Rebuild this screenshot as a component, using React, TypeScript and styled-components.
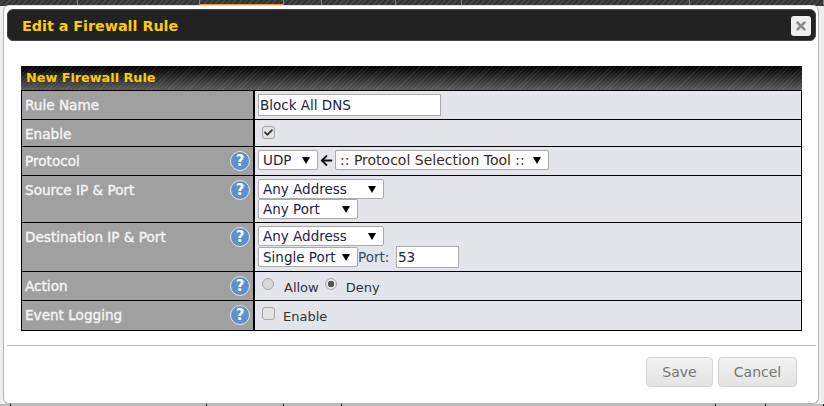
import React from 'react';
import styled, {createGlobalStyle} from "styled-components";
import {FaArrowLeft, FaCheck, FaTimes} from "react-icons/fa";

const GlobalStyle = createGlobalStyle`
    html, body {
        margin: 0;
        padding: 0;
        height: 100%;
        background: #eeeeee;
        font-family: "DejaVu Sans", Verdana, sans-serif;
        font-size: 13.5px;
    }
`

const Select = ({width, text, height = 20, accent}: {width: number; text: string; height?: number; accent?: boolean}) => (
    <StyledSelect $width={width} $height={height} $accent={accent}>
        <span>{text}</span>
        <Caret viewBox="0 0 8 8"><path d="M0 1h8L4 8z"/></Caret>
    </StyledSelect>
);

const Help = () => <HelpIcon>?</HelpIcon>;

const getRows = () => [
    {label: "Rule Name", height: 29, help: false, content: <TextInput $width={183} $height={22}>Block All DNS</TextInput>},
    {label: "Enable", height: 27, help: false, content: <CheckLine><Checkbox><FaCheck/></Checkbox></CheckLine>},
    {
        label: "Protocol", height: 29, help: true, content: (
            <ControlRow>
                <Select width={60} text="UDP"/>
                <Arrow><FaArrowLeft/></Arrow>
                <Select width={214} text=":: Protocol Selection Tool ::" accent/>
            </ControlRow>
        )
    },
    {
        label: "Source IP & Port", height: 47, help: true, content: (
            <ControlStack>
                <Select width={126} text="Any Address"/>
                <Select width={100} text="Any Port"/>
            </ControlStack>
        )
    },
    {
        label: "Destination IP & Port", height: 49, help: true, content: (
            <ControlStack>
                <Select width={126} text="Any Address"/>
                <ControlRow>
                    <Select width={100} text="Single Port"/>
                    <PortLabel>Port:</PortLabel>
                    <TextInput $width={63} $height={22}>53</TextInput>
                </ControlRow>
            </ControlStack>
        )
    },
    {
        label: "Action", height: 29, help: true, content: (
            <CheckLine>
                <Radio/>
                <OptionText $gap={10} $end={6}>Allow</OptionText>
                <Radio $checked/>
                <OptionText $gap={9}>Deny</OptionText>
            </CheckLine>
        )
    },
    {
        label: "Event Logging", height: 30, help: true, content: (
            <CheckLine>
                <Checkbox/>
                <OptionText $gap={8}>Enable</OptionText>
            </CheckLine>
        )
    },
];

const topTabs = [
    {width: 78}, {width: 122}, {width: 84, active: true}, {width: 38}, {width: 74}, {width: 66}, {width: 228}, {width: 134},
];
const bottomTicks = [11, 196, 77, 58, 374, 50, 58];

export default function App() {
    return (
        <Page>
            <GlobalStyle/>
            <TopNav>
                {topTabs.map((tab, i) => <NavTab key={i} $width={tab.width} $active={tab.active}/>)}
            </TopNav>
            <BottomNav>
                {bottomTicks.map((w, i) => <BottomTick key={i} $width={w}/>)}
            </BottomNav>
            <Dialog>
                <TitleBar>
                    <Title>Edit a Firewall Rule</Title>
                    <CloseButton><FaTimes/></CloseButton>
                </TitleBar>
                <Body>
                    <RuleTable>
                        <TableHeader>New Firewall Rule</TableHeader>
                        {getRows().map(row => (
                            <Row key={row.label} $height={row.height}>
                                <LabelCell>
                                    <span>{row.label}</span>
                                    {row.help && <Help/>}
                                </LabelCell>
                                <ValueCell>{row.content}</ValueCell>
                            </Row>
                        ))}
                    </RuleTable>
                </Body>
                <Footer>
                    <Button $width={67}>Save</Button>
                    <Button $width={79}>Cancel</Button>
                </Footer>
            </Dialog>
        </Page>
    );
}

const Page = styled.div`
    position: relative;
    width: 824px;
    height: 406px;
    overflow: hidden;
    background: #eeeeee;
`

const TopNav = styled.div`
    display: flex;
    height: 6px;
    background: repeating-linear-gradient(135deg, #333 0 2px, #444 2px 4px);
`

const NavTab = styled.div<{ $width: number; $active?: boolean }>`
    width: ${p => p.$width}px;
    box-sizing: border-box;
    border-right: 1px solid #888;
    border-bottom: ${p => p.$active ? "1px solid #e09a4a" : "none"};
    height: 5px;
`

const BottomNav = styled.div`
    position: absolute;
    left: 0;
    right: 0;
    bottom: 0;
    height: 2px;
    display: flex;
    background: #bbb;
`

const BottomTick = styled.div<{ $width: number }>`
    width: ${p => p.$width}px;
    box-sizing: border-box;
    border-right: 1px solid #222;
`

const Dialog = styled.div`
    position: absolute;
    left: 3px;
    top: 5px;
    width: 816px;
    height: 399px;
    box-sizing: border-box;
    background: #fff;
    border: 1px solid #b5b5b5;
    border-top-color: #ddd;
    border-radius: 6px;
    padding: 3px 2px 3px 3px;
    display: flex;
    flex-direction: column;
`

const TitleBar = styled.div`
    height: 32px;
    flex: none;
    background: #222222;
    border: 1px solid #444;
    border-radius: 6px;
    box-sizing: border-box;
    display: flex;
    align-items: center;
    justify-content: space-between;
    padding: 2px 4px 0 14px;
`

const Title = styled.div`
    color: #ffcc00;
    font-weight: bold;
    font-size: 14.3px;
`

const CloseButton = styled.div`
    width: 20px;
    height: 20px;
    background: #eeeeee;
    border-radius: 3px;
    color: #888;
    font-size: 14px;
    display: flex;
    align-items: center;
    justify-content: center;
`

const Body = styled.div`
    flex: 1;
    padding: 25px 14px 0;
`

const RuleTable = styled.div`
    width: 781px;
    box-sizing: border-box;
    border: 1px solid #000;
    border-top: none;
`

const TableHeader = styled.div`
    height: 24px;
    margin: 0 -1px;
    padding: 4px 0 0 5px;
    box-sizing: border-box;
    color: #ffcc00;
    font-weight: bold;
    font-size: 12.8px;
    background:
        repeating-linear-gradient(135deg, rgba(255, 255, 255, .07) 0 1px, transparent 1px 3px),
        linear-gradient(#000, #5a5a5a);
`

const Row = styled.div<{ $height: number }>`
    display: flex;
    height: ${p => p.$height}px;
    box-sizing: border-box;
    border-top: 1px solid #000;
`

const LabelCell = styled.div`
    position: relative;
    width: 233px;
    flex: none;
    box-sizing: border-box;
    padding: 6px 0 0 3px;
    background: #a0a0a0;
    border-right: 2px solid #000;
    color: #f4f4f4;
    font-size: 13.6px;
    -webkit-text-stroke: 0.4px #f4f4f4;
`

const ValueCell = styled.div`
    flex: 1;
    box-sizing: border-box;
    padding: 3px 0 0 3px;
    background: #e4e5ea;
`

const HelpIcon = styled.div`
    position: absolute;
    right: 3px;
    top: 4px;
    width: 20px;
    height: 20px;
    box-sizing: border-box;
    border: 1px solid #dfe8f2;
    border-radius: 50%;
    background: #5f91c8;
    color: #fff;
    font-weight: bold;
    font-size: 15px;
    line-height: 18px;
    -webkit-text-stroke: 0;
    text-align: center;
`

const TextInput = styled.div<{ $width: number; $height: number }>`
    width: ${p => p.$width}px;
    height: ${p => p.$height}px;
    box-sizing: border-box;
    background: #fff;
    border: 1px solid #aaa;
    padding-left: 1px;
    line-height: 20px;
    color: #222244;
`

const StyledSelect = styled.div<{ $width: number; $height: number; $accent?: boolean }>`
    width: ${p => p.$width}px;
    height: ${p => p.$height}px;
    flex: none;
    box-sizing: border-box;
    background: #fff;
    border: 1px solid #aaa;
    border-radius: 2px;
    padding: 0 7px 0 4px;
    display: flex;
    align-items: center;
    justify-content: space-between;
    color: ${p => p.$accent ? "#3a2a20" : "#222244"};
    font-size: ${p => p.$accent ? "14px" : "13.5px"};
    white-space: nowrap;
`

const Caret = styled.svg`
    width: 8px;
    height: 8px;
    fill: #000;
`

const ControlRow = styled.div`
    display: flex;
    align-items: center;
`

const ControlStack = styled.div`
    display: flex;
    flex-direction: column;
    gap: 0;
`

const Arrow = styled.span`
    width: 17px;
    display: flex;
    justify-content: center;
    font-size: 13px;
    color: #111;
`

const PortLabel = styled.span`
    width: 38px;
    color: #334a66;
`

const CheckLine = styled.div`
    display: flex;
    align-items: center;
    height: 18px;
    padding-left: 4px;
`

const Checkbox = styled.span`
    width: 13px;
    height: 13px;
    box-sizing: border-box;
    background: #e4e4e4;
    border: 1px solid #a5a5a5;
    border-radius: 3px;
    display: flex;
    align-items: center;
    justify-content: center;
    color: #333;
    font-size: 9px;
`

const Radio = styled.span<{ $checked?: boolean }>`
    width: 12px;
    height: 12px;
    box-sizing: border-box;
    border: 1px solid #a8a8a8;
    border-radius: 50%;
    background: ${p => p.$checked ? "radial-gradient(circle, #555 0 3px, #e4e4e4 3.5px)" : "#d8d8d8"};
`

const OptionText = styled.span<{ $gap: number; $end?: number }>`
    margin-left: ${p => p.$gap}px;
    margin-right: ${p => p.$end ?? 6}px;
    padding-top: 7px;
    color: #333;
    font-size: 13px;
`

const Footer = styled.div`
    height: 55px;
    flex: none;
    box-sizing: border-box;
    border-top: 1px solid #bbb;
    display: flex;
    justify-content: flex-end;
    gap: 5px;
    padding: 11px 19px 0 0;
`

const Button = styled.div<{ $width: number }>`
    width: ${p => p.$width}px;
    height: 30px;
    box-sizing: border-box;
    background: linear-gradient(#f2f2f2, #e4e4e4);
    border: 1px solid #d4d4d4;
    border-radius: 4px;
    color: #777;
    font-size: 14px;
    display: flex;
    align-items: center;
    justify-content: center;
`
